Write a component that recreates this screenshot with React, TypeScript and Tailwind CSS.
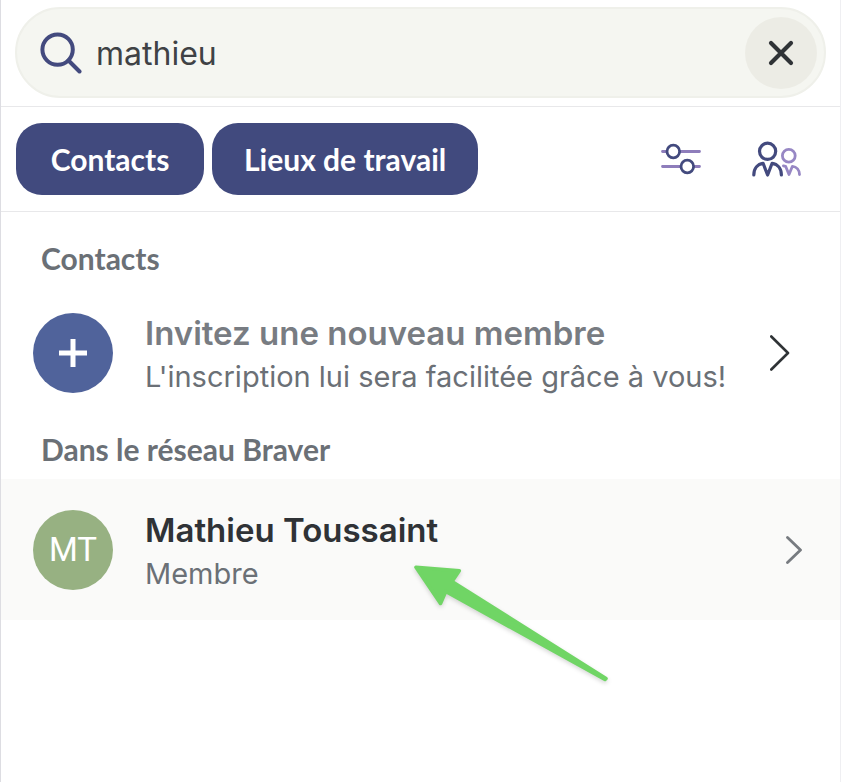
import { useState } from "react";
import type { ReactNode } from "react";

function SearchIcon() {
  return (
    <svg className="size-[42px] shrink-0" viewBox="0 0 42 42" fill="none" stroke="#434a7e" strokeWidth="4" strokeLinecap="round" aria-hidden="true">
      <circle cx="17.6" cy="17.6" r="15.2" />
      <path d="M28.5 28.5 39.5 39.5" />
    </svg>
  );
}

function CloseIcon() {
  return (
    <svg className="size-[26px]" viewBox="0 0 26 26" fill="none" stroke="#2f3336" strokeWidth="4.2" strokeLinecap="round" aria-hidden="true">
      <path d="M3 3 23 23M23 3 3 23" />
    </svg>
  );
}

function FilterIcon() {
  return (
    <svg className="h-8 w-10" viewBox="0 0 40 32" fill="none" aria-hidden="true">
      <g stroke="#8e7dbb" strokeWidth="2.8" strokeLinecap="round">
        <path d="M1.5 8.5H38.5M1.5 23.5H38.5" />
      </g>
      <g fill="#fff" stroke="#434a7e" strokeWidth="2.8">
        <circle cx="12.3" cy="8.5" r="6.3" />
        <circle cx="26.3" cy="23.5" r="6.3" />
      </g>
    </svg>
  );
}

function PeopleIcon() {
  return (
    <svg className="h-9 w-[50px]" viewBox="0 0 50 36" fill="none" strokeWidth="3.2" strokeLinecap="round" strokeLinejoin="round" aria-hidden="true">
      <g stroke="#9787c4" strokeWidth="2.8">
        <circle cx="37.8" cy="14.8" r="6.4" />
        <path d="M32.4 24.8 34.6 25.3 38 33.5 41.4 25.3C45.7 25.6 48.4 29 48.5 33.5" />
      </g>
      <g stroke="#434a7e">
        <circle cx="16.6" cy="10.3" r="8.1" />
        <path d="M2.8 34C2.8 27.5 6.6 23 12.1 22.3L16.6 34 21.1 22.3C26.6 23 30.4 27.5 30.4 34" />
      </g>
    </svg>
  );
}

function Chevron({ large }: { large?: boolean }) {
  return large ? (
    <svg className="mr-3 h-9 w-5 shrink-0" viewBox="0 0 20 36" fill="none" stroke="#2f3336" strokeWidth="2.6" strokeLinecap="round" strokeLinejoin="round" aria-hidden="true">
      <path d="M1.3 1.5 18 18 1.3 34.5" />
    </svg>
  ) : (
    <svg className="h-7 w-4 shrink-0" viewBox="0 0 16 28" fill="none" stroke="#777b80" strokeWidth="2.8" strokeLinecap="round" strokeLinejoin="round" aria-hidden="true">
      <path d="M1.5 1.5 14.5 14 1.5 26.5" />
    </svg>
  );
}

function FilterPill({ children }: { children: ReactNode }) {
  return (
    <button type="button" className="h-[72px] min-w-[188px] rounded-[26px] bg-[#414a7e] px-8 font-[Lato,sans-serif] text-[30px] font-bold text-white">
      {children}
    </button>
  );
}

export default function App() {
  const [query, setQuery] = useState("mathieu");

  return (
    <main className="relative min-h-screen border-x border-l-[#dddde2] border-r-[#efeff2] bg-white font-[Inter,sans-serif] text-[#6b7076]">
      <header className="border-b border-[#e8e8ea] px-3.5 pt-[7px] pb-2">
        <form role="search" onSubmit={(e) => e.preventDefault()} className="flex h-[91px] items-center gap-3.5 rounded-full border-2 border-[#eff0ea] bg-[#f5f6f1] pr-[7px] pl-[23px]">
          <SearchIcon />
          <input
            aria-label="Rechercher"
            value={query}
            onChange={(e) => setQuery(e.target.value)}
            className="min-w-0 flex-1 bg-transparent pt-0.5 text-[32px] text-[#3f4245] outline-none"
          />
          <button type="button" aria-label="Effacer" onClick={() => setQuery("")} className="flex size-[72px] shrink-0 items-center justify-center rounded-full bg-[#ecece5]">
            <CloseIcon />
          </button>
        </form>
      </header>

      <div className="flex items-center gap-2 border-b border-[#e8e8ea] py-4 pr-[39px] pl-[15px]">
        <FilterPill>Contacts</FilterPill>
        <FilterPill>Lieux de travail</FilterPill>
        <div className="ml-auto flex items-center gap-[50px]">
          <button type="button" aria-label="Filtres"><FilterIcon /></button>
          <button type="button" aria-label="Groupes"><PeopleIcon /></button>
        </div>
      </div>

      <section>
        <h2 className="px-10 pt-7 pb-1.5 font-[Lato,sans-serif] text-[30px] leading-9 font-bold">Contacts</h2>
        <button type="button" className="flex h-[141px] w-full items-center pr-[38px] pl-8 text-left">
          <span className="flex size-20 shrink-0 items-center justify-center rounded-full bg-[#50639b]">
            <svg className="size-7" viewBox="0 0 28 28" stroke="#fff" strokeWidth="5" aria-hidden="true">
              <path d="M14 0V28M0 14H28" />
            </svg>
          </span>
          <span className="ml-8 min-w-0 flex-1 pt-1">
            <span className="block text-[33px] leading-[44px] font-semibold text-[#787c82]">Invitez une nouveau membre</span>
            <span className="block text-[29px] leading-[44px]">L'inscription lui sera facilitée grâce à vous!</span>
          </span>
          <Chevron large />
        </button>
      </section>

      <section>
        <h2 className="px-10 pt-2 pb-3 font-[Lato,sans-serif] text-[30px] leading-9 font-bold">Dans le réseau Braver</h2>
        <button type="button" className="flex h-[141px] w-full items-center bg-[#fafaf9] pr-[38px] pl-8 text-left">
          <span className="flex size-20 shrink-0 items-center justify-center rounded-full bg-[#97b182] font-[Roboto,sans-serif] text-[33px] text-white">MT</span>
          <span className="ml-8 min-w-0 flex-1 pt-1">
            <span className="block text-[33px] leading-[44px] font-semibold text-[#2f3236]">Mathieu Toussaint</span>
            <span className="block text-[29px] leading-[44px]">Membre</span>
          </span>
          <Chevron />
        </button>
      </section>

      <svg className="pointer-events-none absolute top-[558px] left-[406px] h-[132px] w-[210px] drop-shadow-[0_2px_2px_rgba(0,0,0,0.16)]" viewBox="407 558 210 132" fill="#70d565" stroke="#70d565" strokeWidth="3.6" strokeLinejoin="round" aria-hidden="true">
        <path d="M416 567.3 459.3 570.7 452 581.5 606 678.5 605 679.5 445.7 591.5 440.5 603.5Z" />
      </svg>
    </main>
  );
}
